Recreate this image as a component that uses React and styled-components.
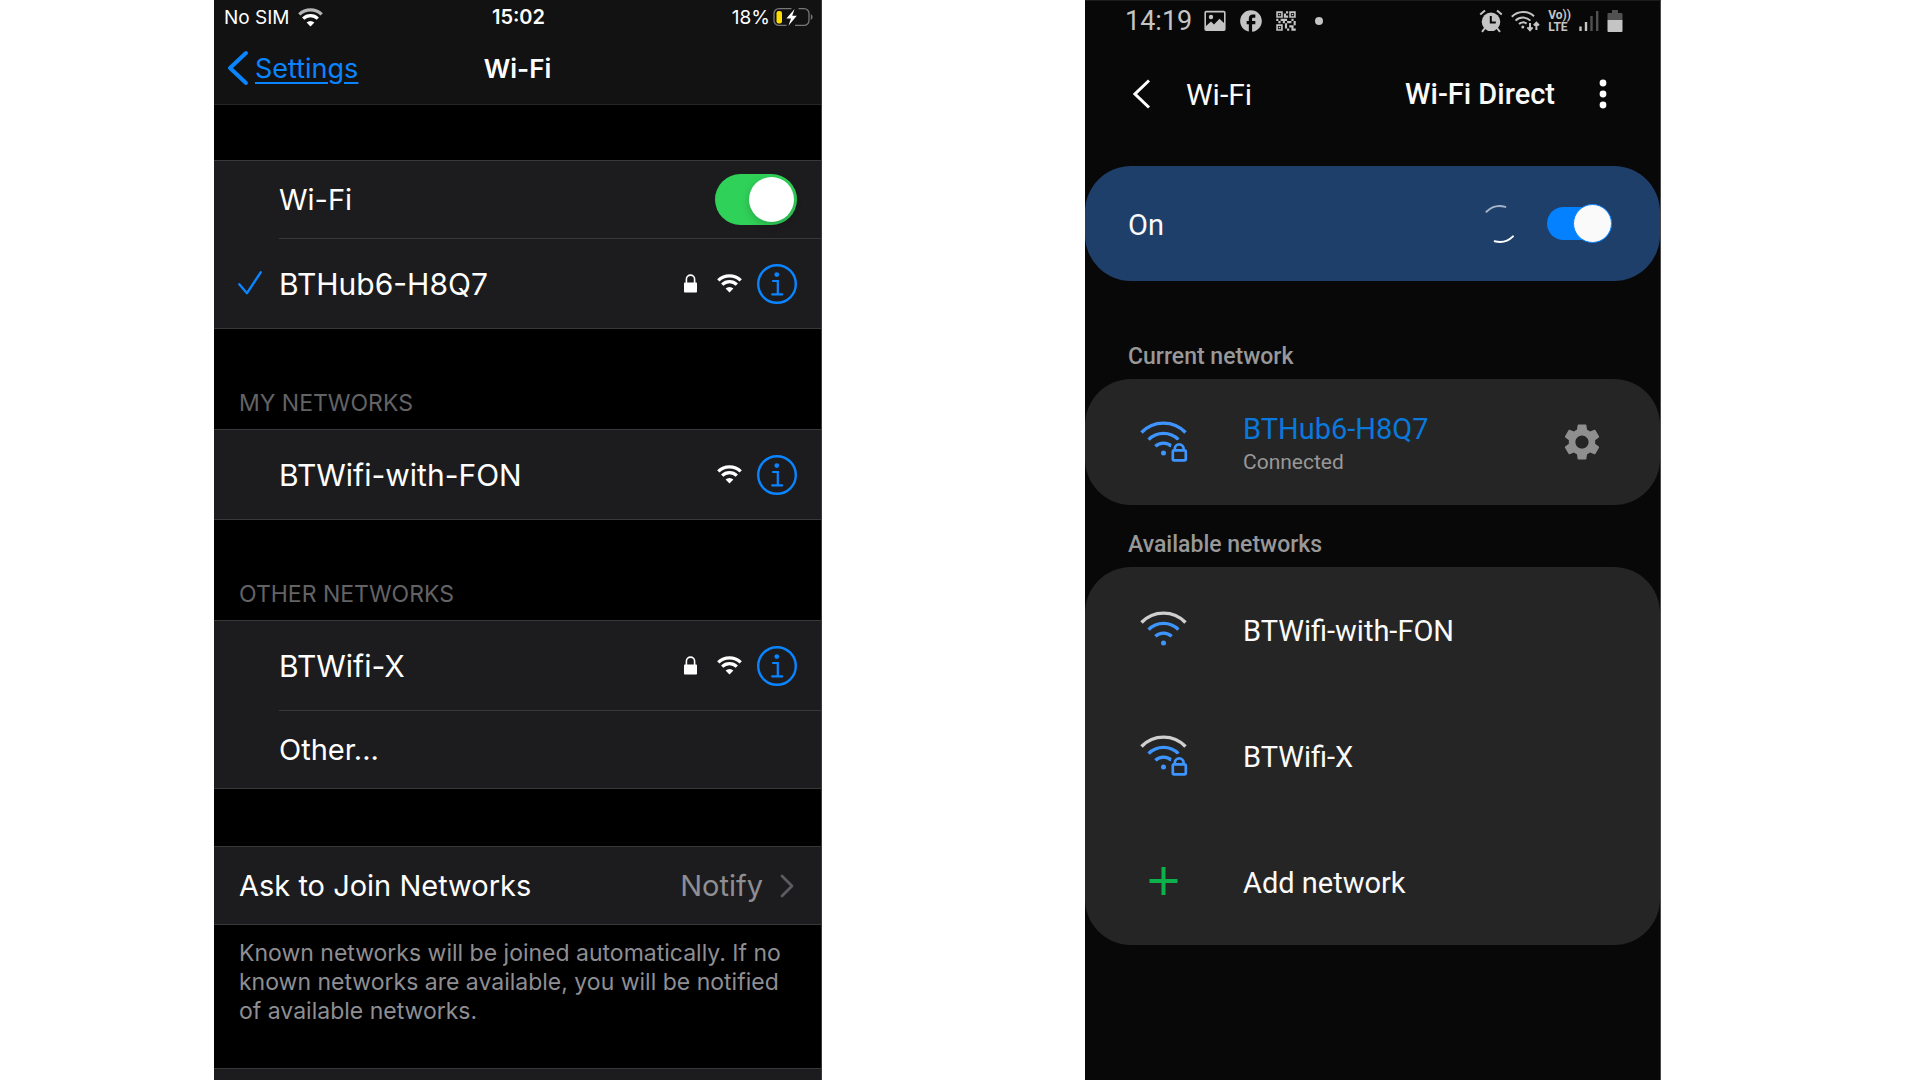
import React, { useState } from 'react'
import styled, { createGlobalStyle } from 'styled-components';
import { MdFacebook, MdQrCode2, MdSettings } from 'react-icons/md';

const WifiGlyph = ({ outer = '#fff' }) => (
  <svg width="25" height="19" viewBox="0 0 25 19" fill="none" aria-hidden="true">
    <path d="M1.3 6.4A16 16 0 0 1 23.7 6.4" stroke={outer} strokeWidth="3.3" />
    <path d="M5.2 10.6A10.4 10.4 0 0 1 19.8 10.6" stroke="#fff" strokeWidth="3.2" />
    <path d="M12.5 18.4L8.6 14.5A5.6 5.6 0 0 1 16.4 14.5Z" fill="#fff" />
  </svg>
);

const LockGlyph = () => (
  <svg width="13" height="19" viewBox="0 0 13 19" fill="none" aria-hidden="true">
    <path d="M2.4 9V5.2a4.1 4.1 0 0 1 8.2 0V9" stroke="#fff" strokeWidth="1.6" />
    <rect y="8.4" width="13" height="10.2" rx="0.8" fill="#fff" />
  </svg>
);

const InfoGlyph = () => (
  <svg width="40" height="40" viewBox="0 0 40 40" fill="none" aria-hidden="true">
    <circle cx="20" cy="20" r="18.8" stroke="#0a84ff" strokeWidth="2.4" />
    <circle cx="19.8" cy="10.6" r="2.4" fill="#0a84ff" />
    <path d="M16 17h4.8v13.2M15.2 30.4h10" stroke="#0a84ff" strokeWidth="2.2" strokeLinecap="round" />
  </svg>
);

const CheckGlyph = () => (
  <svg width="24" height="24" viewBox="0 0 24 24" fill="none" aria-hidden="true">
    <path d="M1.3 13.2L9 22.2L22.7 1.3" stroke="#0a84ff" strokeWidth="2.4" strokeLinecap="round" strokeLinejoin="round" />
  </svg>
);

const BackGlyph = () => (
  <svg width="22" height="36" viewBox="0 0 22 36" fill="none" aria-hidden="true">
    <path d="M19 3L3 18L19 33" stroke="#0a84ff" strokeWidth="4" strokeLinecap="round" strokeLinejoin="round" />
  </svg>
);

const ChevronGlyph = () => (
  <svg width="14" height="24" viewBox="0 0 14 24" fill="none" aria-hidden="true">
    <path d="M2 2L12 12L2 22" stroke="#5b5b60" strokeWidth="2.8" strokeLinecap="round" strokeLinejoin="round" />
  </svg>
);

const ChargingGlyph = () => (
  <svg width="40" height="20" viewBox="0 0 40 20" fill="none" aria-hidden="true">
    <path d="M18.5 1.6H6a5 5 0 0 0-5 5v6.8a5 5 0 0 0 5 5h7.5M22 18.4h9a5 5 0 0 0 5-5V6.6a5 5 0 0 0-5-5h-5.5" stroke="#77777a" strokeWidth="1.3" />
    <path d="M37.8 7v6a3.4 3.4 0 0 0 0-6z" fill="#77777a" />
    <rect x="3.5" y="4" width="5.5" height="12.4" rx="2.2" fill="#fd0" />
    <path d="M21.600 2L13.400 11.600h4.600L15.400 18.800L23.800 8.800H19.200Z" fill="#fff" />
  </svg>
);

const SignalIcon = ({ outer = '#3f95ff', locked }) => (
  <svg width="48" height="42" viewBox={locked ? '0 0 48 42' : '0 -2 48 42'} fill="none" aria-hidden="true">
    <path d="M1.5 11.5A30.5 30.5 0 0 1 45.5 11.5" stroke={outer} strokeWidth="3.4" />
    <path d="M8.6 18.6A21 21 0 0 1 38.4 18.6" stroke="#3f95ff" strokeWidth="3.4" />
    <path d="M15.4 25.4A11.6 11.6 0 0 1 31.6 25.4" stroke="#3f95ff" strokeWidth="3.4" />
    <circle cx="23.5" cy="32" r="2.5" fill="#3f95ff" />
    {
      locked &&
      <g stroke="#3f95ff" strokeWidth="2.7">
        <path d="M30.5 30v-2.4a8.7 8.7 0 0 1 17.4 0V30z" fill="#252525" stroke="none" />
        <path d="M34.8 29.5v-1.8a4.4 4.4 0 0 1 8.8 0v1.8" />
        <rect x="32.8" y="29.4" width="13" height="10" rx="1.4" fill="#252525" />
      </g>
    }
  </svg>
);

const PlusIcon = () => (
  <svg width="48" height="42" viewBox="0 0 48 42" aria-hidden="true">
    <path d="M23.5 6v28M9.5 20h28" stroke="#0cb14b" strokeWidth="4" />
  </svg>
);

const ArrowIcon = () => (
  <svg width="18" height="30" viewBox="0 0 18 30" fill="none" aria-hidden="true">
    <path d="M16 1.5L2 15L16 28.5" stroke="#fff" strokeWidth="3" />
  </svg>
);

const DotsIcon = () => (
  <svg width="8" height="30" viewBox="0 0 8 30" fill="#fff" aria-hidden="true">
    <circle cx="4" cy="4" r="3.4" />
    <circle cx="4" cy="15" r="3.4" />
    <circle cx="4" cy="26" r="3.4" />
  </svg>
);

const SpinnerIcon = () => (
  <svg width="40" height="40" viewBox="0 0 40 40" fill="none" strokeWidth="2" strokeLinecap="round" aria-hidden="true">
    <path d="M6.5 7.8A19 19 0 0 1 25.3 2.9" stroke="#a4b3c8" />
    <path d="M14.7 37.2A19 19 0 0 0 33 32.4" stroke="#fff" />
  </svg>
);

const PictureIcon = () => (
  <svg width="28" height="28" viewBox="0 0 28 28" aria-hidden="true">
    <rect x="4.2" y="4.6" width="19.6" height="18.6" rx="1" fill="none" stroke="#c4c4c4" strokeWidth="1.6" />
    <circle cx="10" cy="10" r="2.2" fill="#c4c4c4" />
    <path d="M4.5 19.500L10 14.500L13 17.500L18.500 11.800L23.500 16.500V23H4.500Z" fill="#c4c4c4" />
  </svg>
);

const AlarmIcon = () => (
  <svg width="24" height="24" viewBox="0 0 24 24" fill="none" stroke="#c4c4c4" strokeWidth="2" aria-hidden="true">
    <circle cx="12" cy="12.800" r="9.300" fill="#c4c4c4" stroke="none" />
    <path d="M1.200 5.600L6 1.600M18 1.600L22.800 5.600M6 19L3 22.800M18 19L21 22.800" />
    <path d="M11.800 7v6.600h5" stroke="#080808" />
  </svg>
);

const TrafficIcon = () => (
  <svg width="29" height="22" viewBox="0 0 29 22" fill="none" stroke="#c4c4c4" strokeWidth="2" aria-hidden="true">
    <path d="M.8 6.8A16 16 0 0 1 23 6.2M4.6 10.6A10.6 10.6 0 0 1 19.4 10.6M8 14A5.800 5.800 0 0 1 15.6 13.6" />
    <circle cx="11.8" cy="17" r="1.500" fill="#c4c4c4" stroke="none" />
    <path d="M19 13v7M16.400 17.400L19 20.200L21.600 17.400M25.400 20v-7M22.800 15.400L25.400 12.600L28 15.400" />
  </svg>
);

const BarsIcon = () => (
  <svg width="20" height="22" viewBox="0 0 20 22" aria-hidden="true">
    <path d="M1.5 16.5V21M7 12V21" stroke="#c4c4c4" strokeWidth="2.4" />
    <path d="M12.5 6V21M18.2 1V21" stroke="#515151" strokeWidth="2.4" />
  </svg>
);

const CellIcon = () => (
  <svg width="16" height="22" viewBox="0 0 16 22" aria-hidden="true">
    <path d="M5 0h6v3h3.5a1 1 0 0 1 1 1v6H.5V4a1 1 0 0 1 1-1H5z" fill="#515151" />
    <path d="M.5 10h15v11a1 1 0 0 1-1 1h-13a1 1 0 0 1-1-1z" fill="#c4c4c4" />
  </svg>
);

const IosNetwork = ({ name, joined, secure }) => (
  <IosRow $tall>
    <IosMark>{joined && <CheckGlyph />}</IosMark>
    <IosRowBody>
      <IosName>{name}</IosName>
      {secure && <LockGlyph />}
      <WifiSlot><WifiGlyph /></WifiSlot>
      <PlainButton aria-label={`${name} details`}><InfoGlyph /></PlainButton>
    </IosRowBody>
  </IosRow>
);

const IosSettings = () => {
  const [wifi, setWifi] = useState(true);

  return (
    <IosPhone>
      <IosHeader>
        <IosStatus>
          <IosCarrier>No SIM <WifiGlyph outer="#b5b5b5" /></IosCarrier>
          <IosClock>15:02</IosClock>
          <IosBattery>18% <ChargingGlyph /></IosBattery>
        </IosStatus>
        <IosNav>
          <IosBack href="#settings"><BackGlyph /><u>Settings</u></IosBack>
          <IosTitle>Wi-Fi</IosTitle>
        </IosNav>
      </IosHeader>
      <IosSpacer $height={55} />
      <IosGroup>
        <IosRow>
          <IosMark />
          <IosRowBody>
            <IosName as="label" htmlFor="ios-wifi">Wi-Fi</IosName>
            <IosSwitch id="ios-wifi" type="checkbox" checked={wifi} onChange={() => setWifi(!wifi)} />
          </IosRowBody>
        </IosRow>
        <IosNetwork name="BTHub6-H8Q7" joined secure />
      </IosGroup>
      <IosLabel>MY NETWORKS</IosLabel>
      <IosGroup>
        <IosNetwork name="BTWifi-with-FON" />
      </IosGroup>
      <IosLabel>OTHER NETWORKS</IosLabel>
      <IosGroup>
        <IosNetwork name="BTWifi-X" secure />
        <IosRow as="button">
          <IosMark />
          <IosRowBody><IosName>Other...</IosName></IosRowBody>
        </IosRow>
      </IosGroup>
      <IosSpacer $height={57} />
      <IosGroup>
        <IosRow as="button" $inset>
          <IosRowBody>
            <IosName>Ask to Join Networks</IosName>
            <IosValue>Notify</IosValue>
            <ChevronGlyph />
          </IosRowBody>
        </IosRow>
      </IosGroup>
      <IosNote>
        Known networks will be joined automatically. If no known networks are available, you will be notified of available networks.
      </IosNote>
      <IosGroup $fill />
    </IosPhone>
  )
};

const AndroidSettings = () => {
  const [wifi, setWifi] = useState(true);

  return (
    <AndroidPhone>
      <AndroidStatus>
        <AndroidClock>14:19</AndroidClock>
        <PictureIcon />
        <MdFacebook size={26} />
        <MdQrCode2 size={26} />
        <NoticeDot />
        <StatusRight>
          <AlarmIcon />
          <TrafficIcon />
          <VoLte><span>Vo))</span><span>LTE</span></VoLte>
          <BarsIcon />
          <CellIcon />
        </StatusRight>
      </AndroidStatus>
      <AndroidNav>
        <PlainButton aria-label="Back"><ArrowIcon /></PlainButton>
        <AndroidTitle>Wi-Fi</AndroidTitle>
        <DirectButton>Wi-Fi Direct</DirectButton>
        <PlainButton aria-label="More options"><DotsIcon /></PlainButton>
      </AndroidNav>
      <OnCard>
        <OnLabel htmlFor="android-wifi">On</OnLabel>
        <SpinnerIcon />
        <AndroidSwitch id="android-wifi" type="checkbox" checked={wifi} onChange={() => setWifi(!wifi)} />
      </OnCard>
      <AndroidLabel $first>Current network</AndroidLabel>
      <Card>
        <AndroidRow as="div">
          <SignalIcon locked />
          <AndroidText>
            <AndroidName $active>BTHub6-H8Q7</AndroidName>
            <AndroidState>Connected</AndroidState>
          </AndroidText>
          <GearButton aria-label="Network settings"><MdSettings size={44} /></GearButton>
        </AndroidRow>
      </Card>
      <AndroidLabel>Available networks</AndroidLabel>
      <Card>
        <AndroidRow>
          <SignalIcon outer="#cfcfcf" />
          <AndroidName>BTWifi-with-FON</AndroidName>
        </AndroidRow>
        <AndroidRow>
          <SignalIcon outer="#cfcfcf" locked />
          <AndroidName>BTWifi-X</AndroidName>
        </AndroidRow>
        <AndroidRow>
          <PlusIcon />
          <AndroidName>Add network</AndroidName>
        </AndroidRow>
      </Card>
    </AndroidPhone>
  )
};

export default function App() {
  return (
    <>
      <GlobalStyle />
      <Stage>
        <IosSettings />
        <AndroidSettings />
      </Stage>
    </>
  )
}

const GlobalStyle = createGlobalStyle`
  *, *::before {
    box-sizing: border-box;
  }
  body {
    margin: 0;
    background: #fff;
  }
  button {
    margin: 0;
    padding: 0;
    border: 0;
    background: none;
    color: inherit;
    font: inherit;
    text-align: left;
    cursor: pointer;
  }
  svg {
    display: block;
    flex: none;
  }
`;

const Stage = styled.main`
  display: grid;
  grid-template-columns: 214fr 608fr 263fr 576fr 259fr;
  min-height: 100vh;
`;

const PlainButton = styled.button`
  flex: none;
`;

const IosPhone = styled.section`
  grid-column: 2;
  display: flex;
  flex-direction: column;
  border-right: 1px solid #3a3a3c;
  background: #000;
  color: #fff;
  font-family: Inter, 'Liberation Sans', sans-serif;
`;

const IosHeader = styled.header`
  height: 105px;
  border-bottom: 1px solid #262628;
  background: #121212;
`;

const IosStatus = styled.div`
  display: grid;
  grid-template-columns: 1fr auto 1fr;
  align-items: center;
  height: 34px;
  padding: 0 8px 0 10px;
  font-size: 20px;
`;

const IosCarrier = styled.span`
  display: flex;
  align-items: center;
  gap: 8px;
  font-size: 19px;
`;

const IosClock = styled.time`
  font-weight: 600;
`;

const IosBattery = styled.span`
  display: flex;
  align-items: center;
  justify-content: flex-end;
  gap: 3px;
  font-size: 19px;
`;

const IosNav = styled.nav`
  display: grid;
  grid-template-columns: 1fr auto 1fr;
  align-items: center;
  height: 68px;
  padding: 0 13px;
  font-size: 27px;
`;

const IosBack = styled.a`
  display: flex;
  align-items: center;
  gap: 6px;
  color: #0a84ff;
  text-decoration: none;

  & > u {
    text-decoration-thickness: 2px;
    text-underline-offset: 4px;
  }
`;

const IosTitle = styled.h1`
  margin: 0;
  font-size: 26px;
  font-weight: 600;
`;

const IosSpacer = styled.div`
  height: ${({ $height }) => $height}px;
`;

const IosGroup = styled.div`
  display: flex;
  flex-direction: column;
  flex: ${({ $fill }) => $fill ? '1 0 auto' : 'none'};
  border-top: 1px solid #38383a;
  border-bottom: ${({ $fill }) => $fill ? 0 : '1px solid #38383a'};
  background: #1c1c1e;
`;

const IosRowBody = styled.div`
  flex: 1;
  align-self: stretch;
  display: flex;
  align-items: center;
  padding-right: 24px;
`;

const IosRow = styled.div`
  display: flex;
  align-items: center;
  min-height: ${({ $tall }) => $tall ? 89 : 77}px;
  padding-right: ${({ $inset }) => $inset ? 3 : 0}px;
  padding-left: ${({ $inset }) => $inset ? 25 : 0}px;
  font-size: ${({ $tall }) => $tall ? 30 : 29}px;

  &:not(:first-child) {
    min-height: ${({ $tall }) => $tall ? 90 : 78}px;
  }
  &:not(:first-child) > ${IosRowBody} {
    border-top: 1px solid #38383a;
  }
`;

const IosMark = styled.span`
  flex: none;
  width: 65px;
  padding-left: 24px;
`;

const IosName = styled.span`
  flex: 1;
`;

const WifiSlot = styled.span`
  padding: 0 15px 0 20px;
`;

const IosValue = styled.span`
  padding-right: 17px;
  color: #8e8e93;
`;

const IosLabel = styled.h2`
  display: flex;
  align-items: flex-end;
  height: 100px;
  margin: 0;
  padding: 0 25px 12px;
  color: #636366;
  font-size: 23px;
  font-weight: 400;
  line-height: 28px;
`;

const IosNote = styled.p`
  margin: 0;
  padding: 14px 25px 42px;
  color: #8e8e93;
  font-size: 23px;
  line-height: 29px;
`;

const IosSwitch = styled.input`
  appearance: none;
  flex: none;
  display: flex;
  align-items: center;
  width: 82px;
  height: 51px;
  margin: 0;
  padding: 0 3px;
  border-radius: 26px;
  background: #39393d;
  cursor: pointer;

  &::before {
    content: '';
    flex: none;
    width: 45px;
    height: 45px;
    border-radius: 50%;
    background: #fff;
    box-shadow: 0 3px 8px rgba(0, 0, 0, 0.2);
  }
  &:checked {
    background: #30d158;
  }
  &:checked::before {
    margin-left: auto;
  }
`;

const AndroidPhone = styled.section`
  grid-column: 4;
  border-top: 1px solid #1c1c1c;
  border-right: 1px solid #4a4a4a;
  background: #080808;
  color: #fafafa;
  font-family: Roboto, 'Liberation Sans', sans-serif;
`;

const AndroidStatus = styled.div`
  display: flex;
  align-items: center;
  gap: 9px;
  height: 40px;
  padding: 0 37px 0 40px;
  color: #c4c4c4;
`;

const AndroidClock = styled.time`
  font-size: 27px;
  line-height: 40px;
`;

const NoticeDot = styled.span`
  width: 8px;
  height: 8px;
  margin-left: 7px;
  border-radius: 50%;
  background: #c4c4c4;
`;

const StatusRight = styled.div`
  display: flex;
  align-items: center;
  gap: 8px;
  margin-left: auto;
`;

const VoLte = styled.span`
  display: flex;
  flex-direction: column;
  font-size: 12px;
  font-weight: 700;
  line-height: 12px;
`;

const AndroidNav = styled.nav`
  display: flex;
  align-items: center;
  height: 106px;
  padding: 0 53px 0 48px;
`;

const AndroidTitle = styled.h1`
  flex: 1;
  margin: 0;
  padding-left: 35px;
  font-size: 30px;
  font-weight: 400;
`;

const DirectButton = styled.button`
  margin-right: 44px;
  font-size: 29px;
  font-weight: 500;
`;

const OnCard = styled.div`
  display: flex;
  align-items: center;
  height: 115px;
  margin-top: 19px;
  padding: 0 48px 0 43px;
  border-radius: 46px;
  background: #1f3f6b;
`;

const OnLabel = styled.label`
  flex: 1;
  padding-top: 2px;
  font-size: 29px;
`;

const AndroidSwitch = styled.input`
  appearance: none;
  flex: none;
  display: flex;
  align-items: center;
  width: 65px;
  height: 33px;
  margin: 0 0 0 27px;
  border-radius: 17px;
  background: #5a5a5a;
  cursor: pointer;

  &::before {
    content: '';
    flex: none;
    width: 39px;
    height: 39px;
    border: 1px solid #0a84ff;
    border-radius: 50%;
    background: #fafafa;
  }
  &:checked {
    background: #0381fe;
  }
  &:checked::before {
    margin-left: auto;
  }
`;

const AndroidLabel = styled.h2`
  margin: 0;
  padding: ${({ $first }) => $first ? 64 : 28}px 43px 10px;
  color: #989898;
  font-size: 23px;
  font-weight: 500;
  line-height: 24px;
`;

const Card = styled.div`
  display: flex;
  flex-direction: column;
  border-radius: 46px;
  background: #252525;
`;

const AndroidRow = styled.button`
  display: flex;
  align-items: center;
  gap: 55px;
  min-height: 126px;
  padding: 0 56px 0 55px;
`;

const AndroidText = styled.div`
  flex: 1;
  display: flex;
  flex-direction: column;
  padding-top: 2px;
`;

const AndroidName = styled.span`
  padding-top: 2px;
  color: ${({ $active }) => $active ? '#0a78dc' : '#fafafa'};
  font-size: 29px;
  line-height: 36px;
`;

const AndroidState = styled.span`
  color: #989898;
  font-size: 21px;
  line-height: 30px;
`;

const GearButton = styled.button`
  flex: none;
  color: #8f8f8f;
`;
